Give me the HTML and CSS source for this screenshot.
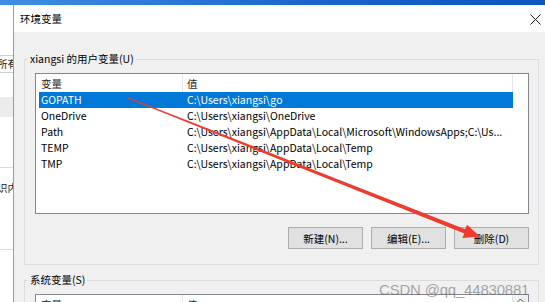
FILE: index.html
```html
<!DOCTYPE html>
<html lang="zh-CN">
<head>
    <meta charset="UTF-8">
    <title>环境变量</title>
    <link rel="stylesheet" href="styles.css">
</head>
<body>
    <div class="topbar"></div>
    <div class="screen">
        <aside class="behind">
            <div class="behind-btn">所有</div>
            <div class="behind-band"></div>
            <div class="behind-line"></div>
            <div class="behind-text">识内</div>
            <div class="behind-line low"></div>
        </aside>
        <section class="dialog">
            <div class="titlebar">
                <span class="title">环境变量</span>
                <svg class="close" width="11" height="11" viewBox="0 0 11 11">
                    <path d="M0.5 0.5 L10.5 10.5 M10.5 0.5 L0.5 10.5" stroke="#111" stroke-width="1" fill="none"/>
                </svg>
            </div>
            <div class="dialog-body">
                <fieldset class="group">
                    <legend>xiangsi 的用户变量(U)</legend>
                    <div class="listview">
                        <div class="lv-head">
                            <div class="col-name">变量</div>
                            <div class="col-val">值</div>
                        </div>
                        <div class="lv-row selected">
                            <div class="col-name">GOPATH</div>
                            <div class="col-val">C:\Users\xiangsi\go</div>
                        </div>
                        <div class="lv-row">
                            <div class="col-name">OneDrive</div>
                            <div class="col-val">C:\Users\xiangsi\OneDrive</div>
                        </div>
                        <div class="lv-row">
                            <div class="col-name">Path</div>
                            <div class="col-val">C:\Users\xiangsi\AppData\Local\Microsoft\WindowsApps;C:\Us...</div>
                        </div>
                        <div class="lv-row">
                            <div class="col-name">TEMP</div>
                            <div class="col-val">C:\Users\xiangsi\AppData\Local\Temp</div>
                        </div>
                        <div class="lv-row">
                            <div class="col-name">TMP</div>
                            <div class="col-val">C:\Users\xiangsi\AppData\Local\Temp</div>
                        </div>
                    </div>
                    <div class="buttons">
                        <button>新建(N)...</button>
                        <button>编辑(E)...</button>
                        <button>删除(D)</button>
                    </div>
                </fieldset>
                <fieldset class="group sys">
                    <legend>系统变量(S)</legend>
                    <div class="listview">
                        <div class="lv-head">
                            <div class="col-name">变量</div>
                            <div class="col-val">值</div>
                            <div class="scroll-up">
                                <svg width="9" height="6" viewBox="0 0 9 6">
                                    <path d="M0.5 5 L4.5 1 L8.5 5" stroke="#555" stroke-width="1" fill="none"/>
                                </svg>
                            </div>
                        </div>
                    </div>
                </fieldset>
            </div>
        </section>
    </div>

    <!-- red annotation arrow drawn over the screenshot -->
    <svg class="arrow" width="545" height="302" viewBox="0 0 545 302">
        <polygon fill="#ee3b2f" points="128.3,97.4 465.2,229.2 467,224.8 480,236.5 462.3,238 464.3,233.5 127.7,98.6"/>
    </svg>
    <div class="watermark">CSDN @qq_44830881</div>
</body>
</html>
```

FILE: styles.css
```css
* {
    margin: 0;
    padding: 0;
    box-sizing: border-box;
}
body {
    width: 545px;
    height: 302px;
    overflow: hidden;
    position: relative;
    background: #ffffff;
    font-family: "Noto Sans CJK SC", "Noto Sans", sans-serif;
    font-size: 10.5px;
    color: #000;
}
.topbar {
    height: 5px;
    background: linear-gradient(to right, #3d8fe3, #1a62cc 60%, #0d55c0);
}
.screen {
    display: flex;
    height: 297px;
    overflow: hidden;
}

/* window behind the dialog */
.behind {
    width: 13px;
    flex-shrink: 0;
    background: #ffffff;
    overflow: hidden;
}
.behind-btn {
    margin-top: 50px;
    height: 18px;
    border-top: 1px solid #cfcfcf;
    border-bottom: 1px solid #cfcfcf;
    line-height: 16px;
    margin-left: -3px;
    white-space: nowrap;
    color: #222;
}
.behind-band {
    margin-top: 24px;
    height: 20px;
    background: #ececec;
}
.behind-line {
    margin-top: 50px;
    height: 1px;
    background: #dddddd;
}
.behind-line.low {
    margin-top: 53px;
}
.behind-text {
    margin-top: 12px;
    margin-left: -3px;
    line-height: 16px;
    white-space: nowrap;
    color: #222;
}

/* dialog */
.dialog {
    flex: 1;
    border-left: 1px solid #9c9c9c;
    background: #f0f0f0;
}
.titlebar {
    height: 27px;
    background: #ffffff;
    display: flex;
    align-items: center;
    justify-content: space-between;
    padding: 0 4px 0 6px;
}
.title {
    color: #000;
}
.close {
    margin-top: 1px;
}
.dialog-body {
    padding-left: 10px;
}
.group {
    width: 515px;
    border: 1px solid #dcdcdc;
    margin-top: 19px;
    padding: 6px 9px 15px 10px;
}
.group legend {
    line-height: 16px;
    padding: 0 2px;
    margin-left: -7px;
    color: #000;
}
.group.sys {
    margin-top: 7px;
}

.listview {
    height: 141px;
    background: #ffffff;
    border: 1px solid #828790;
    padding-left: 3px;
}
.lv-head, .lv-row {
    display: flex;
    width: 474px;
    white-space: nowrap;
}
.lv-head {
    height: 18px;
    line-height: 20px;
    color: #1e1e1e;
    border-right: 1px solid #e5e5e5;
    position: relative;
}
.lv-head .col-name {
    border-right: 1px solid #e5e5e5;
}
.lv-row {
    height: 16px;
    line-height: 16px;
}
.col-name {
    width: 144px;
    padding-left: 2px;
    flex-shrink: 0;
}
.col-val {
    padding-left: 4px;
    overflow: hidden;
}
.lv-row.selected {
    background: #0078d7;
    color: #ffffff;
}
.scroll-up {
    position: absolute;
    left: 474px;
    top: 0;
    width: 15px;
    height: 18px;
    display: flex;
    justify-content: center;
    padding-top: 3px;
    background: #f0f0f0;
}

.buttons {
    display: flex;
    justify-content: flex-end;
    gap: 8px;
    margin-top: 13px;
}
.buttons button {
    width: 75px;
    height: 22px;
    border: 1px solid #adadad;
    background: #e1e1e1;
    font-family: "Noto Sans CJK SC", "Noto Sans", sans-serif;
    font-size: 10.5px;
    color: #000;
}

.arrow {
    position: absolute;
    left: 0;
    top: 0;
}
.watermark {
    position: absolute;
    left: 379px;
    top: 280px;
    font-family: "Liberation Sans", sans-serif;
    font-size: 15px;
    letter-spacing: -0.2px;
    line-height: 20px;
    color: rgba(110, 110, 110, 0.6);
    white-space: nowrap;
}
```
